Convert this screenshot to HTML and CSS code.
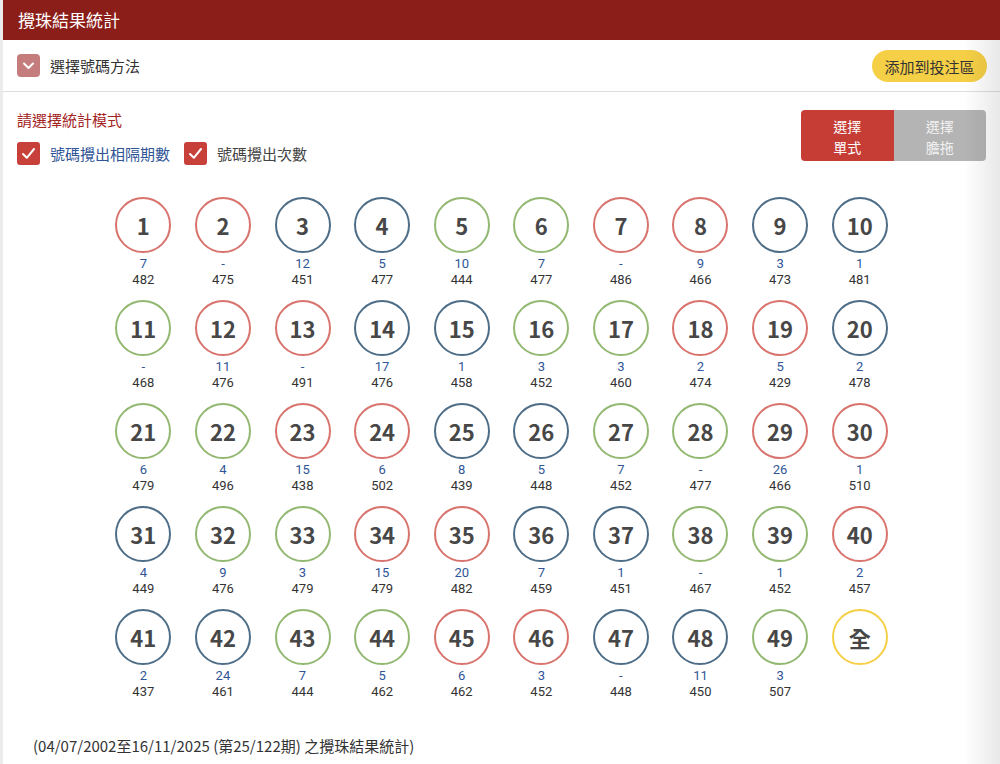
FILE: index.html
```html
<!DOCTYPE html>
<html lang="zh-Hant">
<head>
<meta charset="utf-8">
<title>攪珠結果統計</title>
<link rel="stylesheet" href="styles.css">
</head>
<body>
<div class="page">
  <header class="header">攪珠結果統計</header>
  <div class="method">
    <div class="method-left">
      <span class="toggle-icon"><svg width="23" height="23" viewBox="0 0 23 23"><polyline points="7,9.5 11.5,14 16,9.5" fill="none" stroke="#fff" stroke-width="2" stroke-linecap="round" stroke-linejoin="round"/></svg></span>
      <span class="method-label">選擇號碼方法</span>
    </div>
    <button class="add-btn">添加到投注區</button>
  </div>
  <div class="mode">
    <div class="mode-left">
      <div class="mode-title">請選擇統計模式</div>
      <div class="checks">
        <label class="check"><span class="box"><svg width="23" height="23" viewBox="0 0 23 23"><polyline points="6,12 9.8,15.8 17,7" fill="none" stroke="#fff" stroke-width="2" stroke-linecap="round" stroke-linejoin="round"/></svg></span><span class="check-text blue">號碼攪出相隔期數</span></label>
        <label class="check"><span class="box"><svg width="23" height="23" viewBox="0 0 23 23"><polyline points="6,12 9.8,15.8 17,7" fill="none" stroke="#fff" stroke-width="2" stroke-linecap="round" stroke-linejoin="round"/></svg></span><span class="check-text">號碼攪出次數</span></label>
      </div>
    </div>
    <div class="seg">
      <div class="seg-item active"><span class="seg-line">選擇</span><span class="seg-line">單式</span></div>
      <div class="seg-item"><span class="seg-line">選擇</span><span class="seg-line">膽拖</span></div>
    </div>
  </div>
  <div class="grid">
    <div class="cell"><div class="ball red">1</div><div class="gap">7</div><div class="cnt">482</div></div>
    <div class="cell"><div class="ball red">2</div><div class="gap">-</div><div class="cnt">475</div></div>
    <div class="cell"><div class="ball blue">3</div><div class="gap">12</div><div class="cnt">451</div></div>
    <div class="cell"><div class="ball blue">4</div><div class="gap">5</div><div class="cnt">477</div></div>
    <div class="cell"><div class="ball green">5</div><div class="gap">10</div><div class="cnt">444</div></div>
    <div class="cell"><div class="ball green">6</div><div class="gap">7</div><div class="cnt">477</div></div>
    <div class="cell"><div class="ball red">7</div><div class="gap">-</div><div class="cnt">486</div></div>
    <div class="cell"><div class="ball red">8</div><div class="gap">9</div><div class="cnt">466</div></div>
    <div class="cell"><div class="ball blue">9</div><div class="gap">3</div><div class="cnt">473</div></div>
    <div class="cell"><div class="ball blue">10</div><div class="gap">1</div><div class="cnt">481</div></div>

    <div class="cell"><div class="ball green">11</div><div class="gap">-</div><div class="cnt">468</div></div>
    <div class="cell"><div class="ball red">12</div><div class="gap">11</div><div class="cnt">476</div></div>
    <div class="cell"><div class="ball red">13</div><div class="gap">-</div><div class="cnt">491</div></div>
    <div class="cell"><div class="ball blue">14</div><div class="gap">17</div><div class="cnt">476</div></div>
    <div class="cell"><div class="ball blue">15</div><div class="gap">1</div><div class="cnt">458</div></div>
    <div class="cell"><div class="ball green">16</div><div class="gap">3</div><div class="cnt">452</div></div>
    <div class="cell"><div class="ball green">17</div><div class="gap">3</div><div class="cnt">460</div></div>
    <div class="cell"><div class="ball red">18</div><div class="gap">2</div><div class="cnt">474</div></div>
    <div class="cell"><div class="ball red">19</div><div class="gap">5</div><div class="cnt">429</div></div>
    <div class="cell"><div class="ball blue">20</div><div class="gap">2</div><div class="cnt">478</div></div>

    <div class="cell"><div class="ball green">21</div><div class="gap">6</div><div class="cnt">479</div></div>
    <div class="cell"><div class="ball green">22</div><div class="gap">4</div><div class="cnt">496</div></div>
    <div class="cell"><div class="ball red">23</div><div class="gap">15</div><div class="cnt">438</div></div>
    <div class="cell"><div class="ball red">24</div><div class="gap">6</div><div class="cnt">502</div></div>
    <div class="cell"><div class="ball blue">25</div><div class="gap">8</div><div class="cnt">439</div></div>
    <div class="cell"><div class="ball blue">26</div><div class="gap">5</div><div class="cnt">448</div></div>
    <div class="cell"><div class="ball green">27</div><div class="gap">7</div><div class="cnt">452</div></div>
    <div class="cell"><div class="ball green">28</div><div class="gap">-</div><div class="cnt">477</div></div>
    <div class="cell"><div class="ball red">29</div><div class="gap">26</div><div class="cnt">466</div></div>
    <div class="cell"><div class="ball red">30</div><div class="gap">1</div><div class="cnt">510</div></div>

    <div class="cell"><div class="ball blue">31</div><div class="gap">4</div><div class="cnt">449</div></div>
    <div class="cell"><div class="ball green">32</div><div class="gap">9</div><div class="cnt">476</div></div>
    <div class="cell"><div class="ball green">33</div><div class="gap">3</div><div class="cnt">479</div></div>
    <div class="cell"><div class="ball red">34</div><div class="gap">15</div><div class="cnt">479</div></div>
    <div class="cell"><div class="ball red">35</div><div class="gap">20</div><div class="cnt">482</div></div>
    <div class="cell"><div class="ball blue">36</div><div class="gap">7</div><div class="cnt">459</div></div>
    <div class="cell"><div class="ball blue">37</div><div class="gap">1</div><div class="cnt">451</div></div>
    <div class="cell"><div class="ball green">38</div><div class="gap">-</div><div class="cnt">467</div></div>
    <div class="cell"><div class="ball green">39</div><div class="gap">1</div><div class="cnt">452</div></div>
    <div class="cell"><div class="ball red">40</div><div class="gap">2</div><div class="cnt">457</div></div>

    <div class="cell"><div class="ball blue">41</div><div class="gap">2</div><div class="cnt">437</div></div>
    <div class="cell"><div class="ball blue">42</div><div class="gap">24</div><div class="cnt">461</div></div>
    <div class="cell"><div class="ball green">43</div><div class="gap">7</div><div class="cnt">444</div></div>
    <div class="cell"><div class="ball green">44</div><div class="gap">5</div><div class="cnt">462</div></div>
    <div class="cell"><div class="ball red">45</div><div class="gap">6</div><div class="cnt">462</div></div>
    <div class="cell"><div class="ball red">46</div><div class="gap">3</div><div class="cnt">452</div></div>
    <div class="cell"><div class="ball blue">47</div><div class="gap">-</div><div class="cnt">448</div></div>
    <div class="cell"><div class="ball blue">48</div><div class="gap">11</div><div class="cnt">450</div></div>
    <div class="cell"><div class="ball green">49</div><div class="gap">3</div><div class="cnt">507</div></div>
    <div class="cell"><div class="ball yellow all">全</div></div>
  </div>
  <p class="footnote">(04/07/2002至16/11/2025 (第25/122期) 之攪珠結果統計)</p>
</div>
</body>
</html>
```

FILE: styles.css
```css
html, body {
  margin: 0;
  padding: 0;
}
body {
  background: #ebebeb;
  font-family: "Noto Sans CJK TC", "Noto Sans", sans-serif;
  color: #333;
}
.page {
  position: relative;
  margin-left: 3px;
  background: #fff;
  height: 764px;
  overflow: hidden;
}
.page::after {
  content: "";
  position: absolute;
  top: 40px;
  right: 0;
  bottom: 0;
  width: 36px;
  background: linear-gradient(to right, rgba(0,0,0,0), rgba(0,0,0,0.09));
  pointer-events: none;
}
.header {
  height: 40px;
  background: #8b1e19;
  color: #fff;
  font-size: 17px;
  line-height: 40px;
  padding-left: 15px;
}
.method {
  height: 51px;
  border-bottom: 1px solid #dedede;
  display: flex;
  align-items: center;
  justify-content: space-between;
  padding: 0 13px 0 14px;
}
.method-left {
  display: flex;
  align-items: center;
  gap: 10px;
}
.toggle-icon {
  width: 23px;
  height: 23px;
  border-radius: 4px;
  background: #c47d7c;
  display: flex;
}
.method-label {
  font-size: 15px;
  color: #333;
}
.add-btn {
  font-family: inherit;
  font-size: 15px;
  color: #333;
  background: #f5cf46;
  border: none;
  border-radius: 16px;
  height: 32px;
  width: 115px;
  padding: 0;
  margin-top: 1px;
}
.mode {
  display: flex;
  justify-content: space-between;
  padding: 18px 14px 0 14px;
}
.mode-title {
  font-size: 15px;
  line-height: 20px;
  color: #a3231f;
}
.checks {
  display: flex;
  gap: 14px;
  margin-top: 12px;
}
.check {
  display: flex;
  align-items: center;
  gap: 10px;
}
.box {
  width: 23px;
  height: 23px;
  border-radius: 3px;
  background: #c8403a;
  display: flex;
}
.check-text {
  font-size: 15px;
  color: #444;
}
.check-text.blue {
  color: #2f5597;
}
.seg {
  display: flex;
  width: 185px;
  height: 51px;
  border-radius: 4px;
  overflow: hidden;
}
.seg-item {
  flex: 1;
  display: flex;
  flex-direction: column;
  align-items: center;
  justify-content: center;
  text-align: center;
  font-size: 14px;
  padding-top: 2px;
  color: #f2f2f2;
  background: #b4b4b4;
}
.seg-line {
  display: block;
  height: 20.5px;
  line-height: 20.5px;
}
.seg-item.active {
  background: #c53d35;
  color: #fff;
}
.grid {
  display: grid;
  grid-template-columns: repeat(10, 79.6px);
  justify-content: center;
  row-gap: 12px;
  margin-top: 32px;
}
.cell {
  display: flex;
  flex-direction: column;
  align-items: center;
  height: 91px;
}
.ball {
  box-sizing: border-box;
  width: 56px;
  height: 56px;
  border-radius: 50%;
  border: 2px solid #999;
  display: flex;
  align-items: center;
  justify-content: center;
  font-size: 22px;
  font-weight: bold;
  color: #474747;
  margin-bottom: 3px;
}
.ball.red { border-color: #d8736d; }
.ball.blue { border-color: #4e6d87; }
.ball.green { border-color: #93b872; }
.ball.yellow { border-color: #f5cf46; }
.gap, .cnt {
  font-family: Roboto, "Noto Sans CJK TC", sans-serif;
  font-size: 13px;
  line-height: 16px;
}
.gap { color: #2f5597; }
.cnt { color: #333; }
.footnote {
  margin: 36px 0 0 30px;
  font-size: 15px;
  line-height: 20px;
  color: #333;
}
```
